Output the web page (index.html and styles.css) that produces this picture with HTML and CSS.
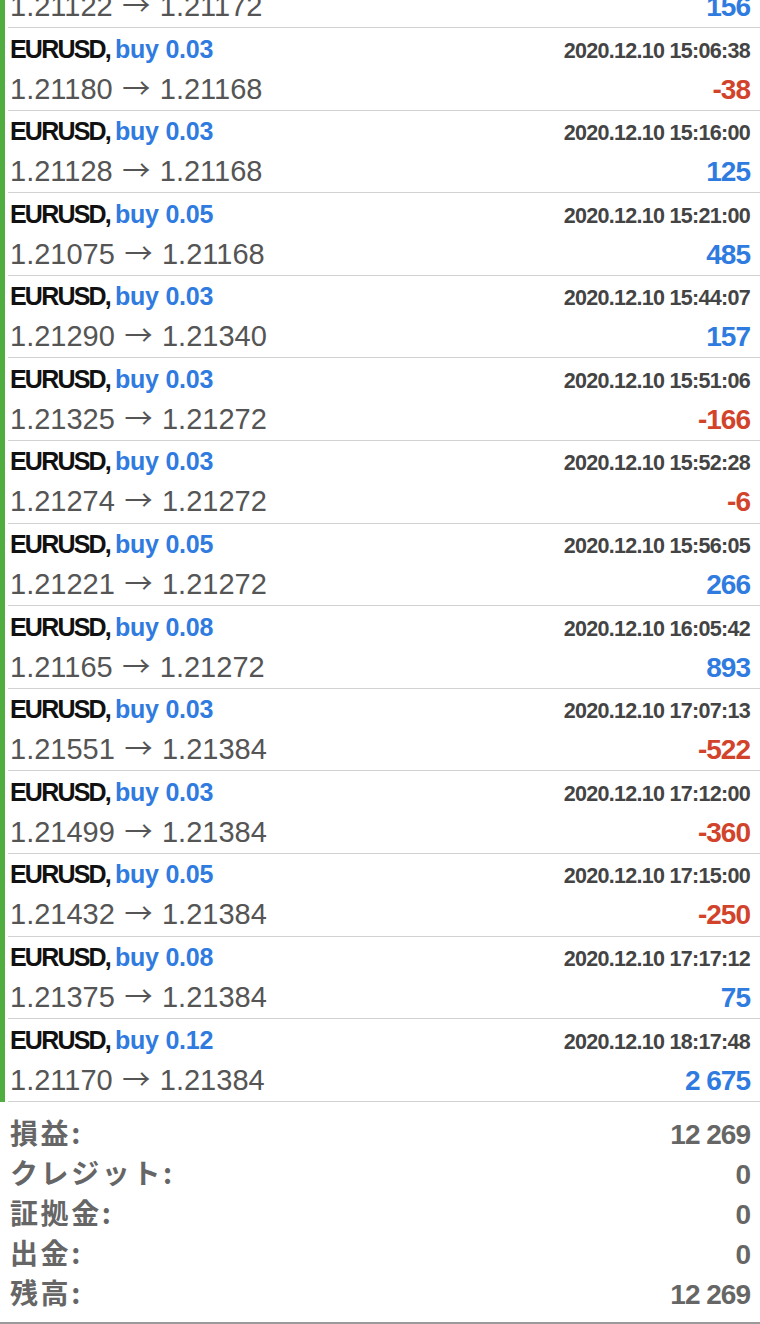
FILE: index.html
```html
<!DOCTYPE html>
<html lang="ja">
<head>
<meta charset="utf-8">
<title>History</title>
<link rel="stylesheet" href="styles.css">
</head>
<body>
<div class="list">
  <div class="row partial">
    <div class="line">
      <span class="price">1.21122 <span class="arrow">→</span> 1.21172</span>
      <span class="profit pos">156</span>
    </div>
  </div>
  <div class="row">
    <div class="line"><span class="sym">EURUSD, <span class="type">buy 0.03</span></span><span class="time">2020.12.10 15:06:38</span></div>
    <div class="line"><span class="price">1.21180 <span class="arrow">→</span> 1.21168</span><span class="profit neg">-38</span></div>
  </div>
  <div class="row">
    <div class="line"><span class="sym">EURUSD, <span class="type">buy 0.03</span></span><span class="time">2020.12.10 15:16:00</span></div>
    <div class="line"><span class="price">1.21128 <span class="arrow">→</span> 1.21168</span><span class="profit pos">125</span></div>
  </div>
  <div class="row">
    <div class="line"><span class="sym">EURUSD, <span class="type">buy 0.05</span></span><span class="time">2020.12.10 15:21:00</span></div>
    <div class="line"><span class="price">1.21075 <span class="arrow">→</span> 1.21168</span><span class="profit pos">485</span></div>
  </div>
  <div class="row">
    <div class="line"><span class="sym">EURUSD, <span class="type">buy 0.03</span></span><span class="time">2020.12.10 15:44:07</span></div>
    <div class="line"><span class="price">1.21290 <span class="arrow">→</span> 1.21340</span><span class="profit pos">157</span></div>
  </div>
  <div class="row">
    <div class="line"><span class="sym">EURUSD, <span class="type">buy 0.03</span></span><span class="time">2020.12.10 15:51:06</span></div>
    <div class="line"><span class="price">1.21325 <span class="arrow">→</span> 1.21272</span><span class="profit neg">-166</span></div>
  </div>
  <div class="row">
    <div class="line"><span class="sym">EURUSD, <span class="type">buy 0.03</span></span><span class="time">2020.12.10 15:52:28</span></div>
    <div class="line"><span class="price">1.21274 <span class="arrow">→</span> 1.21272</span><span class="profit neg">-6</span></div>
  </div>
  <div class="row">
    <div class="line"><span class="sym">EURUSD, <span class="type">buy 0.05</span></span><span class="time">2020.12.10 15:56:05</span></div>
    <div class="line"><span class="price">1.21221 <span class="arrow">→</span> 1.21272</span><span class="profit pos">266</span></div>
  </div>
  <div class="row">
    <div class="line"><span class="sym">EURUSD, <span class="type">buy 0.08</span></span><span class="time">2020.12.10 16:05:42</span></div>
    <div class="line"><span class="price">1.21165 <span class="arrow">→</span> 1.21272</span><span class="profit pos">893</span></div>
  </div>
  <div class="row">
    <div class="line"><span class="sym">EURUSD, <span class="type">buy 0.03</span></span><span class="time">2020.12.10 17:07:13</span></div>
    <div class="line"><span class="price">1.21551 <span class="arrow">→</span> 1.21384</span><span class="profit neg">-522</span></div>
  </div>
  <div class="row">
    <div class="line"><span class="sym">EURUSD, <span class="type">buy 0.03</span></span><span class="time">2020.12.10 17:12:00</span></div>
    <div class="line"><span class="price">1.21499 <span class="arrow">→</span> 1.21384</span><span class="profit neg">-360</span></div>
  </div>
  <div class="row">
    <div class="line"><span class="sym">EURUSD, <span class="type">buy 0.05</span></span><span class="time">2020.12.10 17:15:00</span></div>
    <div class="line"><span class="price">1.21432 <span class="arrow">→</span> 1.21384</span><span class="profit neg">-250</span></div>
  </div>
  <div class="row">
    <div class="line"><span class="sym">EURUSD, <span class="type">buy 0.08</span></span><span class="time">2020.12.10 17:17:12</span></div>
    <div class="line"><span class="price">1.21375 <span class="arrow">→</span> 1.21384</span><span class="profit pos">75</span></div>
  </div>
  <div class="row">
    <div class="line"><span class="sym">EURUSD, <span class="type">buy 0.12</span></span><span class="time">2020.12.10 18:17:48</span></div>
    <div class="line"><span class="price">1.21170 <span class="arrow">→</span> 1.21384</span><span class="profit pos">2 675</span></div>
  </div>
</div>
<div class="summary">
  <div class="sum-line"><span class="label">損益:</span><span class="value">12 269</span></div>
  <div class="sum-line"><span class="label">クレジット:</span><span class="value">0</span></div>
  <div class="sum-line"><span class="label">証拠金:</span><span class="value">0</span></div>
  <div class="sum-line"><span class="label">出金:</span><span class="value">0</span></div>
  <div class="sum-line"><span class="label">残高:</span><span class="value">12 269</span></div>
</div>
</body>
</html>
```
FILE: styles.css
```css
html, body {
  margin: 0;
  padding: 0;
  background: #ffffff;
}
body {
  width: 760px;
  height: 1324px;
  overflow: hidden;
  font-family: "Liberation Sans", Arial, "Noto Sans CJK JP", sans-serif;
}
.list {
  margin-top: -13.6px;
  border-left: 5px solid #4fae3f;
}
.row {
  box-sizing: border-box;
  height: 82.6px;
  margin-left: 3px;
  padding: 0.5px 10px 0 2px;
  border-bottom: 1px solid #d2d2d2;
}
.row.partial {
  height: 41.6px;
  padding-top: 0;
}
.line {
  display: flex;
  justify-content: space-between;
  align-items: baseline;
  height: 40px;
  line-height: 40px;
  white-space: nowrap;
}
.sym {
  font-size: 25px;
  font-weight: bold;
  color: #111111;
  letter-spacing: -1.8px;
}
.type {
  color: #2f7be0;
  letter-spacing: -0.25px;
}
.time {
  font-size: 21.5px;
  font-weight: bold;
  color: #444444;
  letter-spacing: -0.7px;
}
.price {
  font-size: 29px;
  color: #555555;
}
.arrow {
  font-family: "Noto Sans CJK JP", "DejaVu Sans", sans-serif;
  font-weight: normal;
  font-size: 28px;
  line-height: 20px;
  margin: 0 1.5px;
}
.profit {
  font-size: 28px;
  font-weight: bold;
  letter-spacing: -1px;
}
.pos { color: #2f7be0; }
.neg { color: #d2432c; }
.summary {
  box-sizing: border-box;
  height: 222.2px;
  padding: 10px 10px 0 10px;
  border-bottom: 2px solid #9a9a9a;
}
.sum-line {
  display: flex;
  justify-content: space-between;
  align-items: baseline;
  height: 40.2px;
  line-height: 40px;
  color: #666666;
  font-weight: bold;
  font-size: 28px;
}
.label {
  font-family: "Noto Sans CJK JP", "Liberation Sans", sans-serif;
  font-size: 28px;
  letter-spacing: 2.6px;
}
.value {
  letter-spacing: -1px;
}
```
